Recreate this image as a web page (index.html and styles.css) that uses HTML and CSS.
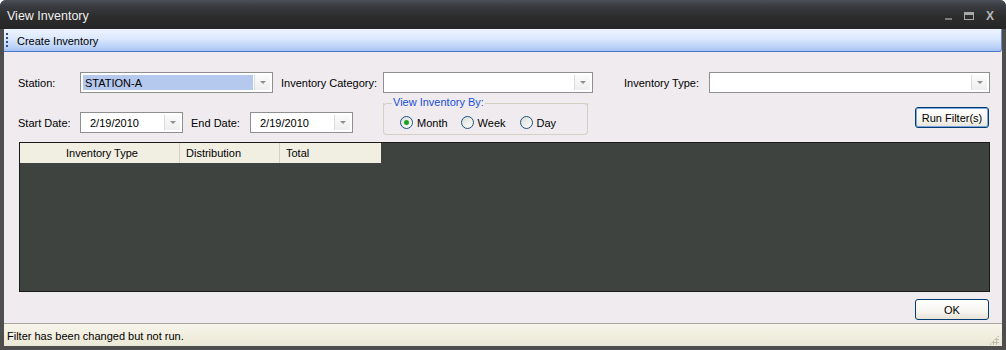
FILE: index.html
```html
<!DOCTYPE html>
<html lang="en">
<head>
  <meta charset="UTF-8">
  <title>View Inventory</title>
  <link rel="stylesheet" href="styles.css">
</head>
<body>
<div class="window">
  <div class="titlebar">
    <span class="title">View Inventory</span>
    <div class="controls">
      <span class="ctl min"></span>
      <span class="ctl max"></span>
      <span class="ctl close">X</span>
    </div>
  </div>

  <div class="frame">
    <div class="toolbar">
      <span class="grip"></span>
      <span class="tool">Create Inventory</span>
    </div>

    <div class="content">
      <div class="row row1">
        <label class="lbl w62">Station:</label>
        <div class="combo w193"><span class="val sel">STATION-A</span><span class="drop"></span></div>
        <label class="lbl w102 ml8">Inventory Category:</label>
        <div class="combo w210"><span class="val"></span><span class="drop"></span></div>
        <label class="lbl w85 ml31">Inventory Type:</label>
        <div class="combo w281"><span class="val"></span><span class="drop"></span></div>
      </div>

      <div class="row row2">
        <label class="lbl w62">Start Date:</label>
        <div class="combo w103"><span class="val date">2/19/2010</span><span class="drop"></span></div>
        <label class="lbl w59 ml8">End Date:</label>
        <div class="combo w103"><span class="val date">2/19/2010</span><span class="drop"></span></div>
        <div class="group">
          <span class="legend">View Inventory By:</span>
          <span class="radio r1"><span class="dot on"></span>Month</span>
          <span class="radio r2"><span class="dot"></span>Week</span>
          <span class="radio"><span class="dot"></span>Day</span>
        </div>
        <button class="btn run">Run Filter(s)</button>
      </div>

      <div class="grid">
        <div class="grid-head">
          <span class="hc c0"></span>
          <span class="hc c1">Inventory Type</span>
          <span class="hc c2">Distribution</span>
          <span class="hc c3">Total</span>
        </div>
      </div>

      <div class="footer">
        <button class="btn ok">OK</button>
      </div>
    </div>

    <div class="status">
      <span>Filter has been changed but not run.</span>
      <span class="sizer"></span>
    </div>
  </div>
</div>
</body>
</html>
```

FILE: styles.css
```css
* {
  margin: 0;
  padding: 0;
  box-sizing: border-box;
}
body {
  width: 1006px;
  height: 350px;
  overflow: hidden;
  font-family: "Liberation Sans", Arial, sans-serif;
  font-size: 11px;
  color: #000;
}
.window {
  width: 1006px;
  height: 350px;
  background: #4e4e4e;
  display: flex;
  flex-direction: column;
  border-radius: 6px 6px 0 0;
}

/* title bar */
.titlebar {
  height: 29px;
  display: flex;
  align-items: center;
  justify-content: space-between;
  padding: 0 12px 0 7px;
  background: linear-gradient(#4b5059 0%, #393c42 20%, #2d2d2d 55%, #262626 100%);
  border-radius: 6px 6px 0 0;
}
.title {
  color: #eeeeee;
  font-size: 12.5px;
  padding-top: 2px;
}
.controls {
  display: flex;
  align-items: center;
  gap: 12px;
  padding-top: 3px;
}
.ctl {
  display: block;
  color: #b9b9b9;
}
.min {
  width: 7px;
  height: 2px;
  background: #7a7a7a;
  margin-top: 6px;
}
.max {
  width: 10px;
  height: 8px;
  border: 1px solid #a8a8a8;
  border-top-width: 3px;
}
.close {
  font-weight: bold;
  font-size: 12px;
}

/* frame */
.frame {
  flex: 1;
  margin: 0 4px 4px 4px;
  background: #efebef;
  display: flex;
  flex-direction: column;
}
.toolbar {
  height: 23px;
  display: flex;
  align-items: center;
  background: linear-gradient(#eef4ff 0%, #dbe8fd 45%, #b8d0f8 85%, #a5c2f2 100%);
  border-bottom: 1px solid #4b77c8;
  border-right: 1px solid #6a8fd0;
  border-radius: 0 0 3px 0;
}
.grip {
  width: 2px;
  height: 15px;
  margin: 0 9px 0 2px;
  background: repeating-linear-gradient(#2a4f8e 0 2px, transparent 2px 4px);
}
.tool {
  padding-top: 1px;
}

.content {
  flex: 1;
  padding: 0 12px 0 14px;
  display: flex;
  flex-direction: column;
}

.row {
  display: flex;
  align-items: center;
}
.row1 {
  margin-top: 20px;
  height: 21px;
}
.row2 {
  margin-top: 10px;
  height: 33px;
  align-items: flex-end;
}
.lbl {
  flex: none;
  white-space: nowrap;
}
.row2 .lbl {
  height: 20px;
  line-height: 20px;
  margin-bottom: 3px;
}
.w62 { width: 62px; }
.w59 { width: 59px; }
.w85 { width: 85px; }
.w102 { width: 102px; }
.w103 { width: 103px; }
.w193 { width: 193px; }
.w210 { width: 210px; }
.w281 { width: 281px; }
.ml8 { margin-left: 8px; }
.ml31 { margin-left: 31px; }

.combo {
  flex: none;
  height: 21px;
  border: 1px solid #8e8f8f;
  background: #fff;
  display: flex;
  align-items: stretch;
  padding: 2px;
}
.row2 .combo {
  height: 21px;
  margin-bottom: 3px;
}
.val {
  flex: 1;
  display: flex;
  align-items: center;
  padding-left: 2px;
}
.val.sel {
  background: #b5c8ee;
}
.val.date {
  padding-left: 7px;
}
.drop {
  width: 16px;
  margin-left: 1px;
  border-left: 1px solid #dcdcdc;
  background: linear-gradient(#fbfbfb, #eeeeee);
  position: relative;
}
.drop::after {
  content: "";
  position: absolute;
  left: 5px;
  top: 6px;
  border: 3px solid transparent;
  border-top: 3px solid #8d8d8d;
}

.group {
  flex: none;
  position: relative;
  width: 205px;
  height: 32px;
  margin-left: 30px;
  margin-bottom: 1px;
  border: 1px solid #d5d0c4;
  border-top: none;
  border-radius: 0 0 4px 4px;
  padding: 8px 0 0 16px;
  display: flex;
  align-items: center;
}
.group::before {
  content: "";
  position: absolute;
  left: -1px;
  right: -1px;
  top: 0;
  height: 6px;
  border: 1px solid #d5d0c4;
  border-bottom: none;
  border-radius: 4px 4px 0 0;
}
.legend {
  position: absolute;
  left: 8px;
  top: -7px;
  padding: 0 1px;
  background: #efebef;
  color: #1a4fd6;
}
.radio {
  display: flex;
  align-items: center;
}
.r1 { margin-right: 13px; }
.r2 { margin-right: 14px; }
.dot {
  width: 13px;
  height: 13px;
  border: 1px solid #1c5180;
  border-radius: 50%;
  background: linear-gradient(135deg, #dcdcd6, #ffffff);
  margin-right: 4px;
  position: relative;
}
.dot.on::after {
  content: "";
  position: absolute;
  left: 3px;
  top: 3px;
  width: 5px;
  height: 5px;
  border-radius: 50%;
  background: #21a121;
}

.btn {
  font-family: "Liberation Sans", Arial, sans-serif;
  font-size: 11px;
  height: 21px;
  width: 74px;
  border: 1px solid #003c74;
  border-radius: 3px;
  background: linear-gradient(#ffffff 0%, #f6f5f0 60%, #e6e3d6 100%);
  color: #000;
}
.run {
  margin-left: auto;
  margin-right: 1px;
  align-self: flex-start;
  margin-top: 4px;
  box-shadow: inset 0 0 0 1px #7fa5e0;
}

.grid {
  margin-top: 6px;
  margin-left: 1px;
  height: 150px;
  background: #3f4340;
  border: 1px solid #1a1a1a;
}
.grid-head {
  display: flex;
  height: 20px;
  width: 361px;
  background: #f1eee2;
}
.hc {
  display: flex;
  align-items: center;
  padding-left: 6px;
  border-right: 1px solid #d6d2c2;
}
.c0 { width: 40px; border-right: none; }
.c1 { width: 120px; }
.c2 { width: 100px; }
.c3 { width: 101px; border-right: none; }

.footer {
  display: flex;
  justify-content: flex-end;
  margin-top: 7px;
}
.ok {
  margin-right: 1px;
}

.status {
  margin-top: auto;
  height: 23px;
  border-top: 1px solid #a9a8a0;
  background: linear-gradient(#f7f5ea, #ebe8d6);
  display: flex;
  align-items: center;
  justify-content: space-between;
  padding: 2px 3px 0;
}
.sizer {
  width: 10px;
  height: 10px;
  margin-top: 8px;
  background: radial-gradient(circle, #bdbab0 1px, transparent 1.2px) 0 0 / 3px 3px;
  clip-path: polygon(100% 0, 100% 100%, 0 100%);
}
```
